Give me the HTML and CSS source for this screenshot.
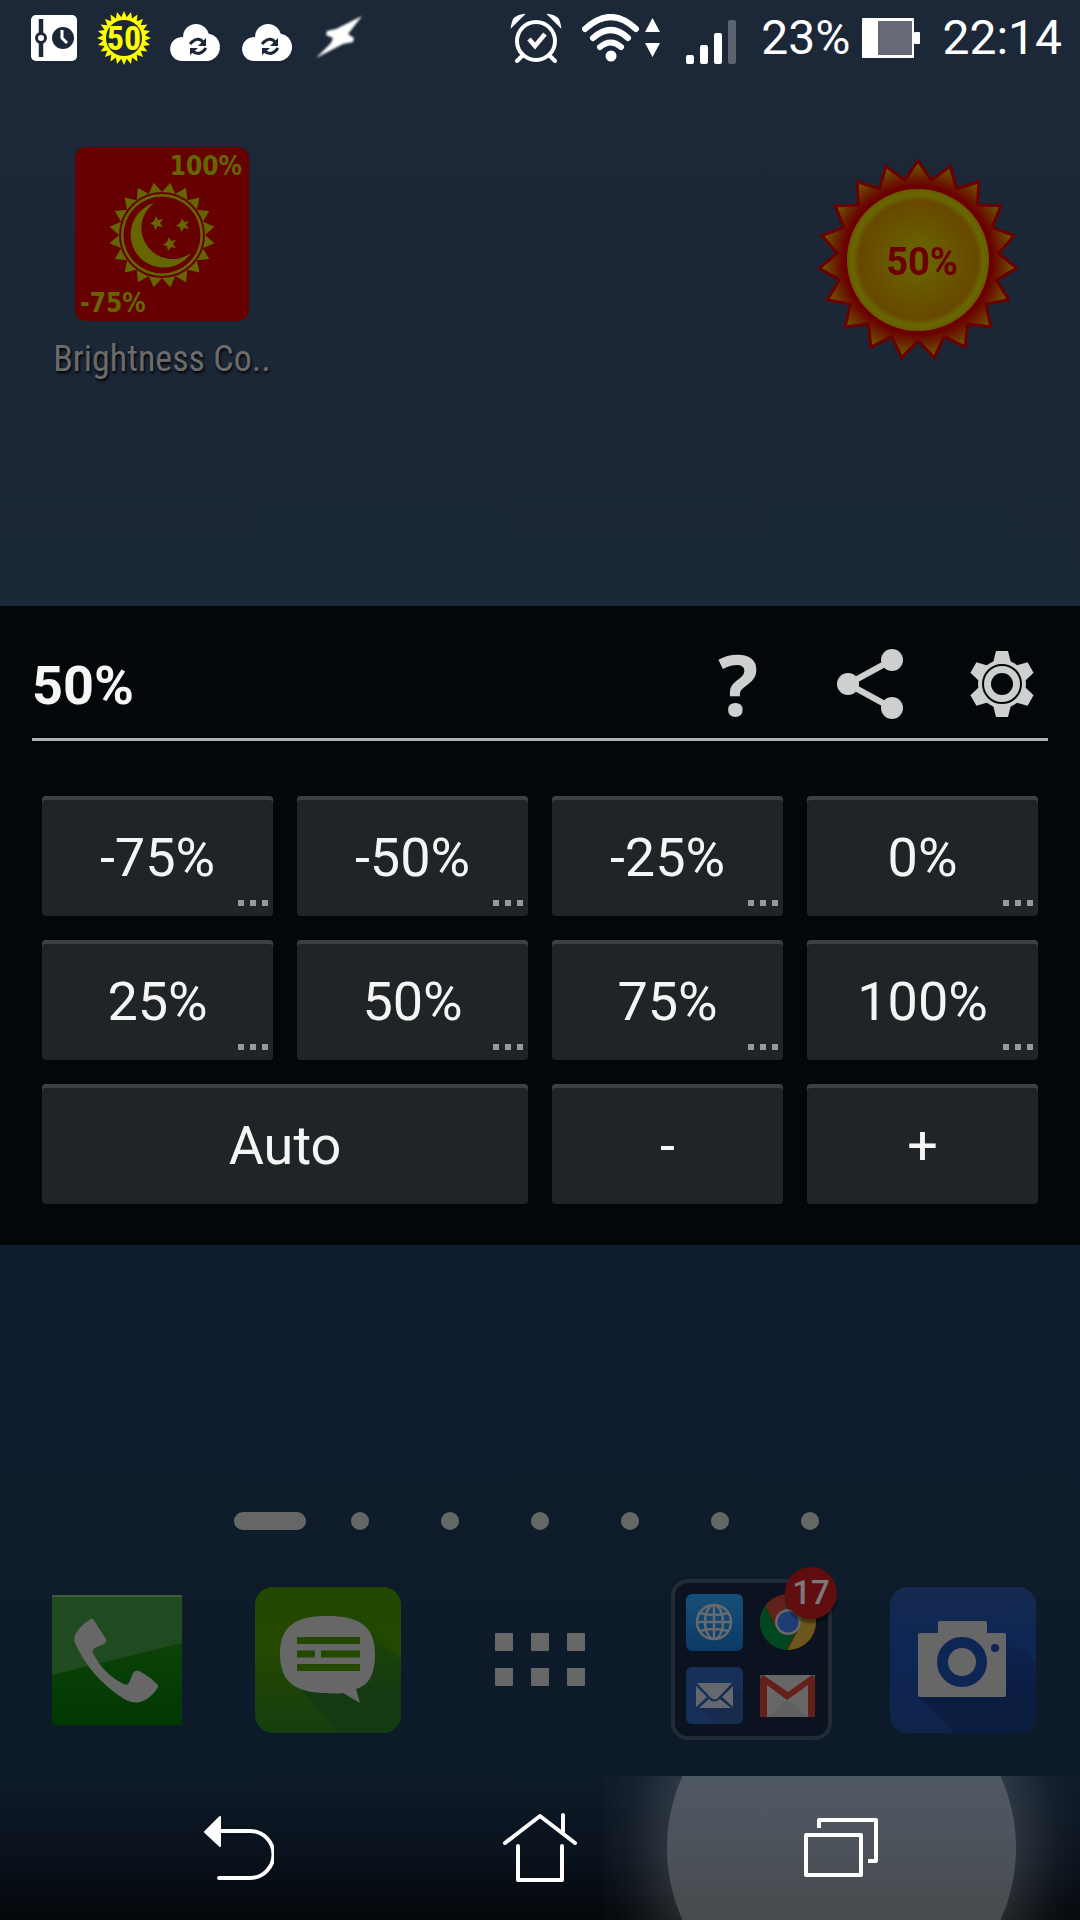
FILE: index.html
```html
<!DOCTYPE html>
<html lang="en">
<head>
<meta charset="utf-8">
<meta name="viewport" content="width=device-width, initial-scale=1">
<title>Brightness Control</title>
<link rel="stylesheet" href="styles.css">
</head>
<body>
<header class="status">
  <div class="status-left">
    <svg width="46" height="46" viewBox="0 0 46 46"><rect width="46" height="46" rx="5" fill="#fff"/><path d="M10 4v38" stroke="#1c2838" stroke-width="4.500"/><circle cx="10" cy="23" r="4.500" fill="#fff" stroke="#1c2838" stroke-width="3"/><circle cx="32" cy="23" r="11" fill="#1c2838"/><path d="M31 15v8l5 5" fill="none" stroke="#fff" stroke-width="3"/></svg>
    <svg width="54" height="54" viewBox="-27 -27 54 54"><polygon data-teeth="24" data-outer="27" data-inner="21" fill="#ff0"/><circle r="18" fill="#1c2838"/><text class="mini-level" y="12" text-anchor="middle" fill="#ff0">50</text></svg>
    <svg width="52" height="38" viewBox="0 0 52 38"><use href="#cloud"/></svg>
    <svg width="52" height="38" viewBox="0 0 52 38"><use href="#cloud"/></svg>
    <svg class="bolt" width="48" height="46" viewBox="0 0 48 46"><path d="M47 1 33 19l6 4-1 4-10 2L1 43l15-15 2-5-7-3 1-4 9-2z" fill="#fff"/></svg>
  </div>
  <div class="status-right">
    <svg width="52" height="50" viewBox="0 0 52 50"><circle cx="26" cy="28" r="19" fill="none" stroke="#fff" stroke-width="4"/><path d="M13 42l-6 6M39 42l6 6" stroke="#fff" stroke-width="4" stroke-linecap="round"/><path d="M2 13Q3 3 13 2zM50 13Q49 3 39 2z" fill="#fff" stroke="#fff" stroke-width="2"/><path d="M19 26l6 7 10-12" fill="none" stroke="#fff" stroke-width="4.500"/></svg>
    <svg width="80" height="48" viewBox="0 0 80 48"><g fill="none" stroke="#fff" stroke-width="6" stroke-linecap="round"><path d="M3 15Q29-9 54 15"/><path d="M11 24Q29 8 46 24"/><path d="M18 33Q29 24 39 33"/></g><circle cx="29" cy="42" r="5.500" fill="#fff"/><path d="M63 18h15L70.500 4zM63 29h15l-7.500 14z" fill="#fff"/></svg>
    <svg class="signal" width="51" height="44" viewBox="0 0 51 44"><g fill="#fff"><rect y="35" width="8" height="9" rx="2"/><rect x="14" y="25" width="8" height="19" rx="2"/><rect x="28" y="13" width="8" height="31" rx="2"/></g><rect x="42" width="8" height="44" rx="2" fill="#5d6471"/></svg>
    <span class="charge">23%</span>
    <svg class="battery" width="58" height="40" viewBox="0 0 58 40"><rect width="52" height="40" rx="1" fill="#fff"/><rect x="16" y="3" width="34" height="34" fill="#666a76"/><rect x="52" y="14" width="6" height="12" rx="1" fill="#fff"/></svg>
    <time>22:14</time>
  </div>
</header>

<section class="home-top">
  <button class="app" type="button">
    <svg width="174" height="174" viewBox="0 0 174 174">
      <rect width="174" height="174" rx="11" fill="#670000"/>
      <text class="icon-text" x="167" y="28" text-anchor="end">100%</text>
      <text class="icon-text" x="5" y="165">-75%</text>
      <g transform="translate(87 88)"><polygon data-teeth="20" data-outer="53" data-inner="43" data-turn="9" fill="#666600"/><circle r="42" fill="none" stroke="#670000" stroke-width="2"/><circle r="38.500" fill="#670000"/><circle r="39.500" fill="none" stroke="#666600" stroke-width="1"/>
      <path d="M-8-32A33 33 0 1 0 29 18A31 31 0 0 1-8-32Z" fill="#666600"/>
      <g fill="#666600"><path id="star" d="M-6-19l2 4 5-1-3 4 3 4-5-1-3 4-1-5-4-1 4-3z"/><use href="#star" x="26" y="2"/><use href="#star" x="13" y="21"/></g></g>
    </svg>
    <span class="app-name">Brightness Co..</span>
  </button>
  <button class="widget" type="button" aria-label="Current brightness">
    <svg width="206" height="206" viewBox="-103 -103 206 206">
      <defs>
        <radialGradient id="rays" gradientUnits="userSpaceOnUse" cx="0" cy="0" r="100"><stop offset=".74" stop-color="#6b0000"/><stop offset=".81" stop-color="#6a1a00"/><stop offset=".95" stop-color="#6a5200"/></radialGradient>
        <radialGradient id="disc"><stop offset="0" stop-color="#686800"/><stop offset=".45" stop-color="#685700"/><stop offset=".83" stop-color="#684700"/><stop offset=".92" stop-color="#686800"/><stop offset="1" stop-color="#6a5a00"/></radialGradient>
      </defs>
      <polygon data-teeth="19" data-outer="99" data-inner="81" fill="url(#rays)" stroke="#6b0000" stroke-width="3"/>
      <circle r="71" fill="url(#disc)"/>
      <text class="widget-level" x="4" y="15" text-anchor="middle">50%</text>
    </svg>
  </button>
</section>

<main class="panel">
  <div class="panel-head">
    <h1>50%</h1>
    <div class="tools">
      <button type="button" class="help" aria-label="Help">?</button>
      <button type="button" aria-label="Share"><svg width="66" height="70" viewBox="0 0 66 70"><path d="M55 11 11 35l44 24" fill="none" stroke="#cecfcf" stroke-width="6"/><g fill="#cecfcf"><circle cx="55" cy="11" r="11"/><circle cx="11" cy="35" r="11"/><circle cx="55" cy="59" r="11"/></g></svg></button>
      <button type="button" aria-label="Settings"><svg width="66" height="66" viewBox="-33 -33 66 66"><g fill="#cecfcf"><circle r="24"/><path id="tooth" d="M-6-33H6L9-21V21L6 33H-6L-9 21V-21z"/><use href="#tooth" transform="rotate(60)"/><use href="#tooth" transform="rotate(120)"/></g><circle r="19" fill="none" stroke="#03070a" stroke-width="2"/><circle r="11" fill="#03070a"/></svg></button>
    </div>
  </div>
  <div class="levels">
    <button type="button" class="level preset">-75%</button>
    <button type="button" class="level preset">-50%</button>
    <button type="button" class="level preset">-25%</button>
    <button type="button" class="level preset">0%</button>
    <button type="button" class="level preset">25%</button>
    <button type="button" class="level preset">50%</button>
    <button type="button" class="level preset">75%</button>
    <button type="button" class="level preset">100%</button>
    <button type="button" class="level auto">Auto</button>
    <button type="button" class="level">-</button>
    <button type="button" class="level">+</button>
  </div>
</main>

<section class="home-bottom">
  <ul class="pages"><li class="current"></li><li></li><li></li><li></li><li></li><li></li><li></li></ul>
  <nav class="dock">
    <button type="button" aria-label="Phone"><svg width="130" height="130" viewBox="0 0 130 130"><defs><linearGradient id="ph" x2="0" y2="1"><stop offset=".4" stop-color="#0c4208"/><stop offset="1" stop-color="#003800"/></linearGradient></defs><rect width="130" height="130" fill="url(#ph)"/><path d="M0 0h130v48L0 80z" fill="#204a1f"/><path d="M0 1h130" stroke="#3c5c3c" stroke-width="2"/><path d="M39 24Q41 23 43 27L54 44Q55 47 52 49L43 53Q40 54 41 58Q52 80 72 89Q75 91 77 88L81 78Q83 75 87 76Q97 81 105 89Q107 91 105 94Q97 105 88 107Q82 109 72 104Q38 82 23 48Q21 43 24 38Q30 29 39 24Z" fill="#676767"/></svg></button>
    <button type="button" aria-label="Messages"><svg width="146" height="146" viewBox="0 0 146 146"><defs><linearGradient id="ms" x2="0" y2="1"><stop stop-color="#224700"/><stop offset=".4" stop-color="#234900"/><stop offset="1" stop-color="#173e10"/></linearGradient><linearGradient id="msh" x2="0" y2="1"><stop stop-color="#1f4506"/><stop offset=".6" stop-color="#143a12"/></linearGradient></defs><rect width="146" height="146" rx="18" fill="url(#ms)"/><path d="M116 45l30 28v55a18 18 0 0 1-18 18H83L42 98z" fill="url(#msh)"/><path d="M72 29C103 29 120 38 120 67C120 85 115 98 101 102L105 116 88 106Q80 107 72 106C42 106 25 96 25 67C25 38 42 29 72 29Z" fill="#676767"/><path d="M42 53.500h63M42 67h18M66 67h39M42 80.500h63" stroke="#234800" stroke-width="7"/></svg></button>
    <button type="button" aria-label="All apps"><svg width="90" height="54" viewBox="0 0 90 54"><g fill="#676767"><rect width="18" height="18" rx="1"/><rect x="36" width="18" height="18" rx="1"/><rect x="72" width="18" height="18" rx="1"/><rect y="35" width="18" height="18" rx="1"/><rect x="36" y="35" width="18" height="18" rx="1"/><rect x="72" y="35" width="18" height="18" rx="1"/></g></svg></button>
    <button type="button" class="folder" aria-label="Folder, 17 notifications">
      <svg width="161" height="161" viewBox="0 0 161 161">
        <defs><linearGradient id="gl" x2="0" y2="1"><stop stop-color="#174f78"/><stop offset="1" stop-color="#0b3a66"/></linearGradient><clipPath id="cc"><circle cx="117" cy="43" r="28"/></clipPath></defs>
        <rect x="2" y="2" width="157" height="157" rx="15" fill="#0a131f" stroke="#222c36" stroke-width="4"/>
        <rect x="15" y="15" width="57" height="57" rx="6" fill="url(#gl)"/>
        <g fill="none" stroke="#676b6e" stroke-width="2.500"><circle cx="43" cy="43" r="17"/><ellipse cx="43" cy="43" rx="9" ry="17"/><path d="M43 26v34M26 43h34M29 34q14 4 28 0M29 52q14-4 28 0"/></g>
        <g clip-path="url(#cc)"><rect x="89" y="15" width="56" height="56" fill="#612219"/><path d="M89 15v56h26l14-24H104z" fill="#00461f"/><path d="M89 15L94 28L106 50L117 43V72H89z" fill="#00461f"/><path d="M117 32h30v40h-31l13-24z" fill="#6b571b"/></g><circle cx="117" cy="43" r="13" fill="#686868"/><circle cx="117" cy="43" r="10.500" fill="#1e3d74"/>
        <rect x="15" y="88" width="57" height="57" rx="6" fill="#17305a"/><path d="M61 106l11 10v23a6 6 0 0 1-6 6H43L27 128z" fill="#162b4e"/>
        <path d="M26 104h35L47 119q-3 3-7 0zM25 107l11 11-11 10zM62 107l-11 11 11 10zM38 120q5 5 11 0l11 9H28z" fill="#65696f"/>
        <rect x="89" y="96" width="55" height="42" rx="2" fill="#676767"/><path d="M96 138l20-17 22 17z" fill="#606060"/><path d="M96 106v32h-5a2 2 0 0 1-2-2V99l3-3 25 17 24-17 3 3v37a2 2 0 0 1-2 2h-5v-32l-21 15z" fill="#65201a"/>
      </svg>
      <span class="badge">17</span>
    </button>
    <button type="button" aria-label="Camera"><svg width="146" height="146" viewBox="0 0 146 146"><defs><linearGradient id="ca" x2="0" y2="1"><stop stop-color="#142a50"/><stop offset=".45" stop-color="#0e2654"/><stop offset="1" stop-color="#10244a"/></linearGradient><linearGradient id="cash" x2="0" y2="1"><stop stop-color="#0e2450"/><stop offset=".6" stop-color="#0c1d42"/></linearGradient></defs><rect width="146" height="146" rx="18" fill="url(#ca)"/><path d="M116 47l30 29v52a18 18 0 0 1-18 18H64L29 110z" fill="url(#cash)"/><path d="M30 46H48V36q0-2 2-2H95q2 0 2 2V46h17q2 0 2 2v60q0 2-2 2H30q-2 0-2-2V48q0-2 2-2z" fill="#676767"/><circle cx="72" cy="75" r="19.500" fill="none" stroke="#0e2654" stroke-width="11"/><circle cx="105" cy="61" r="4" fill="#0e2654"/></svg></button>
  </nav>
</section>

<nav class="keys">
  <button type="button" aria-label="Back"><svg width="70" height="66" viewBox="0 0 70 66"><path d="M17 16h29a23.500 23.500 0 0 1 0 47H15" fill="none" stroke="#fff" stroke-width="4" stroke-linecap="round"/><path d="M1 17 16 2v29z" fill="#fff" stroke="#fff" stroke-width="2" stroke-linejoin="round"/></svg></button>
  <button type="button" aria-label="Home"><svg width="74" height="70" viewBox="0 0 74 70"><path d="M2 30 37 3l35 27M60 2v18M15 33v34h44V33" fill="none" stroke="#fff" stroke-width="4" stroke-linecap="round" stroke-linejoin="round"/></svg></button>
  <button type="button" class="pressed" aria-label="Recent apps"><svg width="74" height="60" viewBox="0 0 74 60"><path d="M2 17h55v40H2zM15 10V2h57v41h-8" fill="none" stroke="#fff" stroke-width="4" stroke-linejoin="round"/></svg></button>
</nav>

<svg class="defs" width="0" height="0"><defs><g id="cloud"><circle cx="25" cy="14" r="13" fill="#fff"/><path d="M12 38a12 12 0 1 1 7-21q10-10 23-5a14 14 0 0 1-5 26z" fill="#fff"/><path d="M19 21q8-9 14-1M35 25q-6 9-14 3" fill="none" stroke="#1c2838" stroke-width="3"/><path d="M35 15v8h-8zM19 32v-7h8z" fill="#1c2838"/></g></defs></svg>
<script src="rays.js"></script>
</body>
</html>
```
FILE: styles.css
```css
* { box-sizing: border-box; }

body {
  margin: 0;
  min-height: 100vh;
  display: flex;
  flex-direction: column;
  overflow-x: hidden;
  font-family: Roboto, "Liberation Sans", sans-serif;
  background: linear-gradient(#1c2838, #1a2737 32%, #101d2e 65%, #0d1a29 92%);
  color: #f5f5f5;
}

button {
  border: 0;
  padding: 0;
  background: none;
  color: inherit;
  font: inherit;
}

svg { display: block; flex: none; }
.defs { position: absolute; }

.status {
  height: 75px;
  padding: 0 18px 0 31px;
  display: flex;
  justify-content: space-between;
  align-items: center;
  color: #fff;
  font-size: 48px;
}
.status-left, .status-right { display: flex; align-items: center; }
.status-left { gap: 20px; }
.status-left use { transform: translateY(4px); }
.status-left svg { overflow: visible; }
.status-right { gap: 20px; }
.signal { margin: 8px 4px 0 4px; }
.battery { margin: 0 2px 0 -8px; }
.bolt { filter: blur(1px); }

.mini-level { font: bold 34px "Roboto Condensed", "Liberation Sans Narrow", Roboto, sans-serif; }

/* the two home areas share the free height equally around the panel */
.home-top {
  flex: 1 1 0px;
  display: flex;
  justify-content: space-between;
  align-items: flex-start;
  padding: 0 36px;
}
.app, .widget {
  width: 252px;
  margin-top: 72px;
  display: flex;
  flex-direction: column;
  align-items: center;
}
.widget { padding-top: 10px; }
.app-name {
  margin-top: 14px;
  font: 36px/48px "Roboto Condensed", "Liberation Sans Narrow", Roboto, sans-serif;
  color: #6b6b6b;
  text-shadow: 1px 2px 3px #000;
  white-space: nowrap;
}
.icon-text { font: bold 26px "DejaVu Sans Condensed", "DejaVu Sans", sans-serif; fill: #666600; }
.widget-level { font: bold 38px Roboto, sans-serif; fill: #6b0000; }

.panel { background: #03070a; padding: 24px 32px 41px; }
.panel-head {
  height: 111px;
  display: flex;
  justify-content: space-between;
  align-items: center;
  border-bottom: 3px solid #adb0af;
}
.panel h1 { margin: 4px 0 0; font-size: 54px; line-height: 64px; }
.tools { display: flex; margin-right: -20px; }
.tools button {
  width: 132px;
  height: 108px;
  display: flex;
  align-items: center;
  justify-content: center;
}
.tools .help {
  color: #cecfcf;
  font: bold 84px/100px "Noto Sans", "Open Sans", sans-serif;
}

.levels {
  display: grid;
  grid-template-columns: repeat(4, 1fr);
  gap: 24px;
  padding: 55px 10px 0;
}
.level {
  position: relative;
  height: 120px;
  padding-top: 4px;
  border-radius: 4px;
  background: #1f2427;
  box-shadow: inset 0 4px #3c4042;
  font-size: 54px;
  line-height: 64px;
}
.auto { grid-column: span 2; }
/* long-press hint in the corner of each preset */
.preset::after {
  content: "";
  position: absolute;
  right: 5px;
  bottom: 10px;
  width: 30px;
  height: 6px;
  background: repeating-linear-gradient(90deg, #999 0 6px, transparent 6px 12px);
}

.home-bottom {
  flex: 1 1 0px;
  display: flex;
  flex-direction: column;
  justify-content: flex-end;
  gap: 49px;
}
.pages {
  margin: 0;
  padding: 0;
  display: flex;
  justify-content: center;
  list-style: none;
}
.pages li { width: 90px; display: flex; justify-content: center; }
.pages li::before {
  content: "";
  width: 18px;
  height: 18px;
  border-radius: 9px;
  background: #656765;
}
.pages .current::before { width: 72px; }

.dock {
  margin: 0 11px 36px;
  display: grid;
  grid-template-columns: repeat(5, 1fr);
  align-items: center;
}
.dock button { justify-self: center; }
.folder { position: relative; }
.badge {
  position: absolute;
  top: -12px;
  right: -5px;
  width: 52px;
  height: 52px;
  border-radius: 50%;
  background: #600d10;
  color: #7a7a7a;
  font-size: 33px;
  font-weight: 500;
  line-height: 52px;
  text-align: center;
  box-shadow: 0 4px 2px rgba(0, 0, 0, .4);
}

.keys {
  height: 144px;
  padding: 0 89px;
  display: grid;
  grid-template-columns: repeat(3, 1fr);
  overflow: hidden;
  background: linear-gradient(#0d1a29, #0a131e 50%, #04070b);
}
.keys button {
  position: relative;
  display: flex;
  align-items: center;
  justify-content: center;
}
.keys svg { position: relative; }
.pressed::before {
  content: "";
  position: absolute;
  top: 0;
  bottom: 0;
  left: -87px;
  right: -89px;
  background: radial-gradient(circle 238px at center, rgba(255, 255, 255, .27) 174px, rgba(255, 255, 255, .13) 175px, rgba(255, 255, 255, .04) 215px, rgba(255, 255, 255, .01) 238px);
}
```
FILE: rays.js
```js
// Builds the ring of pointed rays for every sun shape.
document.querySelectorAll("polygon[data-teeth]").forEach(function (ray) {
  var d = ray.dataset;
  var n = Number(d.teeth);
  var turn = Number(d.turn || 0) * Math.PI / 180;
  var points = [];
  for (var i = 0; i < n * 2; i++) {
    var r = i % 2 ? Number(d.inner) : Number(d.outer);
    var a = turn + i * Math.PI / n;
    points.push((r * Math.sin(a)).toFixed(2) + "," + (-r * Math.cos(a)).toFixed(2));
  }
  ray.setAttribute("points", points.join(" "));
});
```
